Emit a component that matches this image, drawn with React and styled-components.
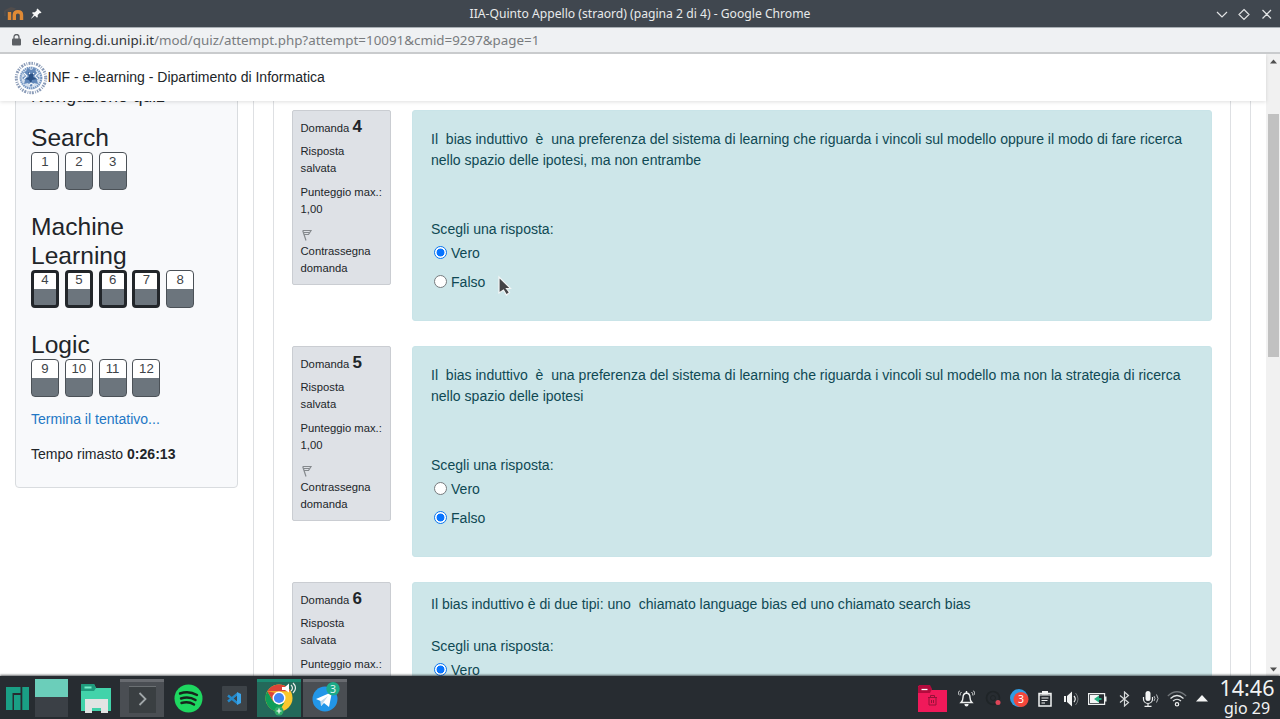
import React from "react";
import styled, { createGlobalStyle } from "styled-components";

const GlobalStyle = createGlobalStyle`
  * { box-sizing: border-box; }
  html, body { margin: 0; height: 100%; overflow: hidden; }
  body { font-family: "Liberation Sans", Arial, sans-serif; color: #212529; }
  svg { display: block; flex: none; }
`;

const Desktop = styled.div`
  width: 1280px;
  height: 719px;
  display: flex;
  flex-direction: column;
  overflow: hidden;
  background: #fff;
`;

const TitleBar = styled.header`
  height: 27px;
  flex: none;
  display: grid;
  grid-template-columns: 60px 1fr 72px;
  align-items: center;
  background: #40474f;
  font: 12.15px/26px "Noto Sans", sans-serif;
  color: #e8eaeb;
`;
const TitleIcons = styled.div`
  display: flex;
  align-items: center;
  padding-left: 4px;
  gap: 6px;
`;
const WindowTitle = styled.div`
  text-align: center;
  padding-left: 12px;
`;
const AddressBar = styled.div`
  height: 27px;
  flex: none;
  display: flex;
  align-items: center;
  gap: 11px;
  padding-left: 12px;
  background: #eff1f3;
  border-top: 1px solid #a9afb4;
  border-bottom: 2px solid #c9cbcd;
  font: 13.37px/24px "Noto Sans", sans-serif;
  color: #797c7f;
`;
const Host = styled.span`
  color: #303336;
`;

const Viewport = styled.div`
  height: 622px;
  flex: none;
  display: flex;
  overflow: hidden;
`;
const Page = styled.div`
  width: 1266px;
  display: flex;
  flex-direction: column;
`;
const SiteHeader = styled.div`
  height: 47px;
  flex: none;
  display: flex;
  align-items: center;
  padding-left: 14px;
  position: relative;
  z-index: 1;
  background: #fff;
  box-shadow: 0 1px 4px rgba(0, 0, 0, 0.13);
  font-size: 14.03px;
`;
const SiteName = styled.span`
  margin-left: -0.5px;
  padding-bottom: 1px;
`;
const PageBody = styled.div`
  flex: 1;
  min-height: 0;
  display: flex;
  overflow: hidden;
`;
const Aside = styled.aside`
  width: 253px;
  flex: none;
  padding-left: 15px;
`;
const NavCard = styled.section`
  width: 223px;
  height: 397px;
  margin-top: -10px;
  padding-left: 15px;
  background: #f8f9fb;
  border: 1px solid #d9dcdf;
  border-radius: 4px;
`;
const CardTitle = styled.h5`
  margin: -6px 0 0;
  height: 36.5px;
  font: 500 17.6px/21px "Liberation Sans", sans-serif;
`;
const Group = styled.div`
  margin-bottom: 22px;
  &:last-of-type { margin-bottom: 12.5px; }
`;
const GroupTitle = styled.h3`
  margin: 0;
  width: 150px;
  font-weight: 400;
  font-size: 24.6px;
  line-height: 29px;
`;
const NavButtons = styled.div`
  display: flex;
  gap: 5.8px;
`;
const NavButton = styled.div`
  width: 28px;
  height: 38px;
  border: ${(p) => (p.$current ? "3px" : "1px")} solid ${(p) => (p.$current ? "#22262a" : "#4b5157")};
  border-radius: 4px;
  background: linear-gradient(#fff 0 ${(p) => (p.$current ? "16px" : "18px")}, #6c757d 0);
  text-align: center;
  font-size: 13.2px;
  line-height: ${(p) => (p.$current ? "14px" : "18px")};
  color: #3e4347;
`;
const Summary = styled.footer`
  font-size: 14.05px;
  line-height: 20px;
`;
const FinishLink = styled.a`
  display: block;
  color: #2377c5;
`;
const Timer = styled.div`
  margin-top: 15px;
`;

const Region = styled.div`
  width: 998px;
  flex: none;
  padding: 0 19px;
  border: solid #dee0e3;
  border-width: 0 1px;
`;
const Questions = styled.main`
  width: 958px;
  height: 580px;
  padding: 9px 18px 0;
  border: solid #dee0e3;
  border-width: 0 1px;
`;
const Question = styled.article`
  height: 236px;
  display: flex;
  align-items: flex-start;
  gap: 21px;
`;
const Info = styled.div`
  width: 99px;
  height: 175px;
  flex: none;
  padding: 6px 0 0 7.5px;
  border: 1px solid #cacdd2;
  border-radius: 2px;
  background: #dee1e6;
  font-size: 11.25px;
  line-height: 17px;
`;
const InfoLine = styled.div`
  margin-bottom: 7px;
  white-space: pre-line;
`;
const Number = styled.h3`
  margin: 0 0 5px;
  font-weight: 400;
  font-size: 11.25px;
  line-height: 20px;
  b { font-size: 17px; }
`;
const FlagRow = styled.div`
  height: 17.500px;
  padding: 4px 0 0 1px;
`;
const Formulation = styled.div`
  width: 800px;
  height: 211px;
  flex: none;
  padding: ${(p) => (p.$short ? "11px" : "18px")} 18px 0;
  border: 1px solid #c9e4e8;
  border-radius: 3px;
  background: #cde6e9;
  color: #0f4954;
  font-size: 14.06px;
  line-height: 21px;
  white-space: pre;
`;
const Prompt = styled.div`
  margin-top: ${(p) => (p.$short ? "21px" : "48px")};
`;
const Option = styled.label`
  display: flex;
  align-items: center;
  gap: 4px;
  height: 21px;
  padding-left: 3px;
  margin: ${(p) => (p.$first ? "3px" : "8px")} 0 0;
`;
const Radio = styled.span`
  width: 13px;
  height: 13px;
  margin-top: -3px;
  border-radius: 50%;
  border: 1px solid ${(p) => (p.$on ? "#0b76ef" : "#777b7e")};
  background: ${(p) => (p.$on ? "radial-gradient(circle, #0975ff 0 3.6px, #fff 4.3px)" : "#fff")};
`;
const Scrollbar = styled.div`
  width: 14px;
  height: 622px;
  display: flex;
  flex-direction: column;
  align-items: center;
  background: #f1f1f1;
  padding: 5px 0 4px;
`;
const Thumb = styled.div`
  width: 11px;
  height: 243px;
  margin: 50px 0 auto;
  background: #c1c1c1;
`;

const Taskbar = styled.footer`
  height: 43px;
  flex: none;
  display: flex;
  position: relative;
  background: #272c31;
  box-shadow: 0 -1px 2px rgba(20, 25, 28, 0.65);
`;
const Launcher = styled.div`
  width: ${(p) => p.$w || 46}px;
  display: flex;
  align-items: center;
  justify-content: center;
  padding-top: 1px;
  padding-left: ${(p) => p.$shift || 0}px;
`;
const Pager = styled.div`
  width: 33px;
  height: 38px;
  margin: 3px 0 0;
  background: linear-gradient(#6bceba 0 18px, #3b4046 0);
`;
const Task = styled.div`
  width: 44px;
  height: 38px;
  margin: 3px 0 0;
  display: flex;
  justify-content: center;
  align-items: center;
  background: ${(p) => (p.$active ? "#23695a" : "#4a4e53")};
  border-top: 3px solid ${(p) => (p.$active ? "#1c8b72" : "#686b70")};
  svg { margin-top: ${(p) => p.$lift || 0}px; }
`;
const Tray = styled.div`
  margin-left: auto;
  display: flex;
  align-items: center;
  padding-top: 2px;
`;
const TraySlot = styled.div`
  width: ${(p) => p.$w}px;
  display: flex;
  justify-content: center;
`;
const Clock = styled.div`
  width: 66px;
  margin-top: -3px;
  text-align: center;
  color: #f2f3f3;
  font: 21.5px/22px "Noto Sans", sans-serif;
  small { display: block; font-size: 16px; line-height: 18px; }
`;
const Cursor = styled.svg`
  position: absolute;
  left: 497px;
  top: 275px;
`;

const MoodleIcon = () => (
  <svg width="21" height="16" viewBox="0 0 21 16" fill="none">
    <path d="M5.500 14V6M10.300 14V9Q10.300 5.800 13.900 5.800T17.500 9V14" stroke="#e08a35" strokeWidth="3.400" />
    <path d="M0 4.500 7 1l5 1.500-3 2.500-5 1z" fill="#514d4c" />
    <path d="M1 5v5" stroke="#5b5552" />
  </svg>
);
const PinIcon = () => (
  <svg width="11" height="11" viewBox="0 0 11 11">
    <path d="m6.5.5 4 4-1 .8-.7-.2L6.700 7l.1 2-.8.8-2.100-2L.5 10.600 0 10.400l2.800-3.600L1 4.900l.8-.7 2.100.1 2-2-.3-.9z" fill="#f7f8f8" />
  </svg>
);
const WindowControls = () => (
  <svg width="72" height="26" viewBox="0 0 72 26" fill="none" stroke="#e1e3e4" strokeWidth="1.200">
    <path d="m9 11 5 5 5-5M36 8.500l5 5-5 5-5-5zM54.500 9l8.500 8.500M63 9l-8.500 8.500" />
  </svg>
);
const LockIcon = () => (
  <svg width="9" height="12" viewBox="0 0 9 12">
    <rect y="4.500" width="9" height="7" rx="1" fill="#5c6064" />
    <path d="M2 5V3a2.500 2.500 0 0 1 5 0v2" fill="none" stroke="#5c6064" strokeWidth="1.300" />
  </svg>
);
const Seal = () => (
  <svg width="34" height="34" viewBox="0 0 34 34" fill="none">
    <circle cx="17" cy="17" r="14.700" stroke="#8b9cb8" strokeWidth="3" strokeDasharray="1.500 1.100 .8 1.300 2 1" />
    <circle cx="17" cy="17" r="11.500" fill="#d5e0ee" />
    <circle cx="17" cy="17" r="10.300" stroke="#7394c0" strokeWidth="2" strokeDasharray="1.300 .8" />
    <path d="m12 10 2-3 3 2 4-2 1 4 3 2-2 2 3 2-3 2 1 4-4-1-3 4-3-4-4 1 1-4-3-2 3-2-2-3z" fill="#6288ba" />
    <path d="m14 11 3 2 3-2-1 5 4 2-5 1-1 4-2-4-4-1 4-2z" fill="#2a5186" />
    <path d="m10 12 3 3-3 3m14-6-3 3 3 3M15 12l1 1m3-1 1 1m-5 11 2-2 3 2" stroke="#f3f7fb" strokeWidth="1.200" />
  </svg>
);
const FlagIcon = () => (
  <svg width="11" height="12" viewBox="0 0 11 12" fill="none" stroke="#85898d" strokeWidth="1.200">
    <path d="M.7 1.500 4 11.500M.7 1.500H9L6.500 5.500H2M2 3.500h5" />
  </svg>
);
const Arrow = ({ down }) => (
  <svg width="7" height="5" viewBox="0 0 7 5">
    <path d={down ? "M0 .5h7l-3.500 4z" : "M0 4.500h7L3.500.5z"} fill="#505050" />
  </svg>
);

const ManjaroIcon = () => (
  <svg width="23" height="23" viewBox="0 0 23 23" fill="#1aa085">
    <path d="M0 0h14.500v6H6.500v17H0zM8 8h6.500v15H8zM16.300 0H23v23h-6.700z" />
  </svg>
);
const FilesIcon = () => (
  <svg width="31" height="31" viewBox="0 0 31 31">
    <path d="M1 1h12l2 4h15v23H0V2z" fill="#42d3aa" />
    <path d="M1 1h12l2 4-2 3H0V2z" fill="#1f9a7c" />
    <path d="M3.500 4.500h7" stroke="#75edc8" strokeWidth="2" />
    <path d="M4 16h23v14h-7v-5h-9v5H4z" fill="#e2e4e3" />
  </svg>
);
const TerminalIcon = () => (
  <svg width="27" height="27" viewBox="0 0 27 27" fill="none">
    <rect width="27" height="27" fill="#3a3f42" />
    <path d="M0 .5h27" stroke="#6b7073" />
    <path d="m10.500 7 6 6-6 6" stroke="#a1a7a9" strokeWidth="1.800" />
  </svg>
);
const SpotifyIcon = () => (
  <svg width="29" height="29" viewBox="0 0 29 29" fill="none">
    <circle cx="14.500" cy="14.500" r="14" fill="#1ed760" />
    <path d="M6 9.500q9-3 17 1.500M7 14.500q8-2.500 14.500 1.500M7.500 19q7-2 12.500 1.500" stroke="#17251c" strokeWidth="2.400" strokeLinecap="round" />
  </svg>
);
const CodeIcon = () => (
  <svg width="25" height="25" viewBox="0 0 25 25" fill="none">
    <rect width="25" height="25" rx="1" fill="#3d4348" />
    <path d="m6 9.500 10 8M6 15.500l10-8" stroke="#2489ca" strokeWidth="2.500" />
    <path d="m15 6 4 2v9l-4 2z" fill="#3aa3e7" />
    <path d="M15 10v5l-3-2.500z" fill="#3d4348" />
  </svg>
);
const ChromeIcon = () => (
  <svg width="34" height="35" viewBox="0 0 34 35" fill="none">
    <circle cx="17" cy="17" r="13.500" fill="#fbc72d" />
    <path d="M5.300 10.250a13.500 13.500 0 0 1 23.400 0H17z" fill="#db4437" />
    <path d="m5.300 10.250 5.900 10.100L17 23.700l5.500-2.500L17 30.500A13.500 13.500 0 0 1 5.300 10.250z" fill="#0f9d58" />
    <path d="m5.300 10.250 6 10.200 6-8z" fill="#db4437" />
    <circle cx="17" cy="17" r="6.500" fill="#fff" />
    <circle cx="17" cy="17" r="5.100" fill="#4285f4" />
    <path d="M20 6h3l4-3.500v9L23 9h-3z" fill="#fff" />
    <path d="M29 4q3 3 0 6M31 2q5 5 0 10" stroke="#e5eae7" strokeWidth="1.200" />
    <circle cx="17" cy="30" r="4.500" fill="#2fae66" />
    <path d="M17 27.500v5M14.500 30h5" stroke="#fff" strokeWidth="1.200" />
  </svg>
);
const TelegramIcon = () => (
  <svg width="34" height="34" viewBox="0 0 34 34">
    <circle cx="17" cy="17" r="12.500" fill="#2296e8" />
    <path d="m8 17 16-7-3 15-5-4-3 3-.5-5z" fill="#fff" />
    <path d="m13 19 7-5-5 7-2 3z" fill="#bed8ea" />
    <circle cx="25" cy="6.700" r="6.700" fill="#1daa88" />
    <text x="25" y="10.500" textAnchor="middle" fontFamily="Noto Sans" fontSize="10.500" fill="#e4f5f0">3</text>
  </svg>
);

const TrashFolderIcon = () => (
  <svg width="29" height="27" viewBox="0 0 29 27" fill="none">
    <path d="M0 1h11l3 4h15v22H0z" fill="#f0195a" />
    <path d="M1 0h11l2 4-2 4H0V2z" fill="#b30b3d" />
    <path d="M3.500 4.500h6" stroke="#fff" strokeWidth="1.300" />
    <path d="M10 12.500h9M12.500 12v-1.500h4V12M11 13v7h7v-7m-4.500 2v3m2-3v3" stroke="#961238" />
  </svg>
);
const BellIcon = () => (
  <svg width="17" height="17" viewBox="0 0 17 17" fill="none" stroke="#eef0f0" strokeWidth="1.400">
    <path d="M3 12.500q2-2 2-5 0-4 3.500-4.500 3.500.5 3.500 4.500 0 3 2 5zM8.500 1v2" />
    <path d="M3.500 2Q2 3 2 5.500M1.500.7Q0 2.500 0 5M13.500 2Q15 3 15 5.500M15.500.7Q17 2.500 17 5" strokeWidth=".9" />
    <path d="M6.500 14h4v.5a2 2 0 0 1-4 0z" fill="#eef0f0" stroke="none" />
  </svg>
);
const RecorderIcon = () => (
  <svg width="17" height="17" viewBox="0 0 17 17" fill="none">
    <circle cx="8" cy="8" r="6.500" stroke="#1f2427" strokeWidth="1.700" />
    <circle cx="8" cy="8" r="2.500" stroke="#1f2427" />
    <circle cx="13" cy="12.500" r="2.500" fill="#df4659" />
  </svg>
);
const MessageBadgeIcon = () => (
  <svg width="19" height="19" viewBox="0 0 19 19">
    <circle cx="9" cy="9" r="9" fill="#2f9ce3" />
    <circle cx="11" cy="10.500" r="7.500" fill="#f4473b" />
    <text x="11" y="14.300" textAnchor="middle" fontFamily="Noto Sans" fontSize="10.500" fill="#fff">3</text>
  </svg>
);
const ClipboardIcon = () => (
  <svg width="14" height="16" viewBox="0 0 14 16" fill="none" stroke="#f1f2f2">
    <path d="M1 2.500h12V15H1z" strokeWidth="1.500" />
    <path d="M4 0h6v3.500H4z" fill="#f1f2f2" stroke="none" />
    <path d="M1 4h12M3.500 7h7M3.500 9.500h6M3.500 12H7" strokeWidth="1.200" />
  </svg>
);
const VolumeIcon = () => (
  <svg width="17" height="16" viewBox="0 0 17 16" fill="none">
    <path d="M1 5h2v6H1zM4 5l5-4.500v15L4 11z" fill="#f1f2f2" />
    <path d="M11 5q2.500 3 0 6" stroke="#f1f2f2" strokeWidth="1.200" />
    <path d="M12.500 2q5 6 0 12" stroke="#767a7d" />
  </svg>
);
const BatteryIcon = () => (
  <svg width="19" height="12" viewBox="0 0 19 12">
    <path d="M.6.600h16v10.800H.6z" fill="none" stroke="#eef0f0" strokeWidth="1.200" />
    <path d="M17 3.500h1.500v5H17z" fill="#eef0f0" />
    <path d="M2 2h9v8H2z" fill="#f4f5f5" />
    <path d="m6 6 5-3.500V5h2.500v2H11v2.500z" fill="#26b081" />
  </svg>
);
const BluetoothIcon = () => (
  <svg width="11" height="16" viewBox="0 0 11 16" fill="none" stroke="#d6d9da" strokeWidth="1.200">
    <path d="m1 4.500 8.500 7L5.500 15V1l4 3.500-8.500 7" />
  </svg>
);
const MicIcon = () => (
  <svg width="19" height="16" viewBox="0 0 19 16" fill="none" stroke="#eef0f0" strokeWidth="1.200">
    <rect x="4.500" y="0" width="5" height="10" rx="2.500" fill="#f4f5f5" stroke="none" />
    <path d="M2.500 6v2a4.500 4.500 0 0 0 9 0V6M7 12.500V15M3.500 15.300h7" />
    <path d="M13 5q2 2.500 0 5M15.500 3.500q3 4 0 8" stroke="#b7bbbe" strokeWidth="1" />
  </svg>
);
const WifiIcon = () => (
  <svg width="20" height="16" viewBox="0 0 20 16" fill="none">
    <path d="M.8 5q9.200-8.500 18.400 0" stroke="#71767a" strokeWidth="1.200" />
    <path d="M3.500 7.500q6.500-6 13 0M6 10q4-3.500 8 0" stroke="#e1e4e5" strokeWidth="1.200" />
    <circle cx="10" cy="13.300" r="1.700" stroke="#f1f2f2" strokeWidth="1.200" />
  </svg>
);
const UpIcon = () => (
  <svg width="12" height="7" viewBox="0 0 12 7">
    <path d="M0 6.500 6 0l6 6.500z" fill="#f3f4f4" />
  </svg>
);

const groups = [
  { title: "Search", items: [1, 2, 3] },
  { title: "Machine Learning", items: [4, 5, 6, 7, 8] },
  { title: "Logic", items: [9, 10, 11, 12] },
];
const current = [4, 5, 6, 7];

const questions = [
  {
    n: 4,
    answer: "Vero",
    text: "Il  bias induttivo  è  una preferenza del sistema di learning che riguarda i vincoli sul modello oppure il modo di fare ricerca\nnello spazio delle ipotesi, ma non entrambe",
  },
  {
    n: 5,
    answer: "Falso",
    text: "Il  bias induttivo  è  una preferenza del sistema di learning che riguarda i vincoli sul modello ma non la strategia di ricerca\nnello spazio delle ipotesi",
  },
  {
    n: 6,
    answer: "Vero",
    short: true,
    text: "Il bias induttivo è di due tipi: uno  chiamato language bias ed uno chiamato search bias",
  },
];

const trayItems = [
  [TrashFolderIcon, 41],
  [BellIcon, 27],
  [RecorderIcon, 26],
  [MessageBadgeIcon, 26],
  [ClipboardIcon, 26],
  [VolumeIcon, 26],
  [BatteryIcon, 27],
  [BluetoothIcon, 26],
  [MicIcon, 26],
  [WifiIcon, 27],
  [UpIcon, 24],
];

export default function App() {
  return (
    <Desktop>
      <GlobalStyle />
      <TitleBar>
        <TitleIcons><MoodleIcon /><PinIcon /></TitleIcons>
        <WindowTitle>IIA-Quinto Appello (straord) (pagina 2 di 4) - Google Chrome</WindowTitle>
        <WindowControls />
      </TitleBar>
      <AddressBar>
        <LockIcon />
        <span><Host>elearning.di.unipi.it</Host>/mod/quiz/attempt.php?attempt=10091&amp;cmid=9297&amp;page=1</span>
      </AddressBar>
      <Viewport>
        <Page>
          <SiteHeader><Seal /><SiteName>INF - e-learning - Dipartimento di Informatica</SiteName></SiteHeader>
          <PageBody>
            <Aside>
              <NavCard>
                <CardTitle>Navigazione quiz</CardTitle>
                {groups.map((g) => (
                  <Group key={g.title}>
                    <GroupTitle>{g.title}</GroupTitle>
                    <NavButtons>
                      {g.items.map((n) => (
                        <NavButton key={n} $current={current.includes(n)}>{n}</NavButton>
                      ))}
                    </NavButtons>
                  </Group>
                ))}
                <Summary>
                  <FinishLink>Termina il tentativo...</FinishLink>
                  <Timer>Tempo rimasto <b>0:26:13</b></Timer>
                </Summary>
              </NavCard>
            </Aside>
            <Region>
              <Questions>
                {questions.map((q) => (
                  <Question key={q.n}>
                    <Info>
                      <Number>Domanda <b>{q.n}</b></Number>
                      <InfoLine>{"Risposta\nsalvata"}</InfoLine>
                      <InfoLine>{"Punteggio max.:\n1,00"}</InfoLine>
                      <FlagRow><FlagIcon /></FlagRow>
                      <InfoLine>{"Contrassegna\ndomanda"}</InfoLine>
                    </Info>
                    <Formulation $short={q.short}>
                      <div>{q.text}</div>
                      <Prompt $short={q.short}>Scegli una risposta:</Prompt>
                      <Option $first><Radio $on={q.answer === "Vero"} />Vero</Option>
                      <Option><Radio $on={q.answer === "Falso"} />Falso</Option>
                    </Formulation>
                  </Question>
                ))}
              </Questions>
            </Region>
          </PageBody>
        </Page>
        <Scrollbar><Arrow /><Thumb /><Arrow down /></Scrollbar>
      </Viewport>
      <Taskbar>
        <Launcher $w={35}><ManjaroIcon /></Launcher>
        <Pager />
        <Launcher $w={52} $shift={4}><FilesIcon /></Launcher>
        <Task $lift={-1}><TerminalIcon /></Task>
        <Launcher $w={48}><SpotifyIcon /></Launcher>
        <Launcher $w={45}><CodeIcon /></Launcher>
        <Task $active $lift={-2}><ChromeIcon /></Task>
        <Launcher $w={2} />
        <Task $lift={-2}><TelegramIcon /></Task>
        <Tray>
          {trayItems.map(([Icon, w], i) => (
            <TraySlot key={i} $w={w}><Icon /></TraySlot>
          ))}
          <Clock>14:46<small>gio 29</small></Clock>
        </Tray>
      </Taskbar>
      <Cursor width="15" height="22" viewBox="0 0 15 22">
        <path d="M2 2v16l4.500-3 3 5 3-2.500-3-4h4z" fill="#444446" stroke="#f4f6f6" strokeWidth="1.200" />
      </Cursor>
    </Desktop>
  );
}
